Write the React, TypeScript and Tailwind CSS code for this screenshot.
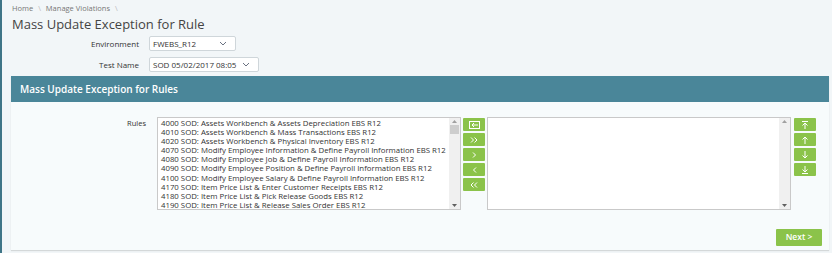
const rules = [
  "4000 SOD: Assets Workbench & Assets Depreciation EBS R12",
  "4010 SOD: Assets Workbench & Mass Transactions EBS R12",
  "4020 SOD: Assets Workbench & Physical Inventory EBS R12",
  "4070 SOD: Modify Employee Information & Define Payroll Information EBS R12",
  "4080 SOD: Modify Employee Job & Define Payroll Information EBS R12",
  "4090 SOD: Modify Employee Position & Define Payroll Information EBS R12",
  "4100 SOD: Modify Employee Salary & Define Payroll Information EBS R12",
  "4170 SOD: Item Price List & Enter Customer Receipts EBS R12",
  "4180 SOD: Item Price List & Pick Release Goods EBS R12",
  "4190 SOD: Item Price List & Release Sales Order EBS R12",
];

function Chevron() {
  return (
    <svg width="8" height="5" viewBox="0 0 8 5" className="text-gray-500">
      <path d="M1 1l3 3 3-3" fill="none" stroke="currentColor" strokeWidth="1" />
    </svg>
  );
}

function Select({ value, width }: { value: string; width: string }) {
  return (
    <div
      className={`${width} h-[15px] bg-white border border-[#cfd6da] rounded-[2px] flex items-center justify-between pl-[3px] pr-[8px] text-[8px] text-[#333]`}
    >
      <span>{value}</span>
      <Chevron />
    </div>
  );
}

function Scrollbar({ thumb }: { thumb?: boolean }) {
  return (
    <div className="w-[11px] bg-[#f0f0f0] flex flex-col items-center justify-between py-[2px]">
      <div className="flex flex-col items-center gap-[2px]">
        <svg width="5" height="3" viewBox="0 0 5 3">
          <path d="M0 3L2.5 0 5 3z" fill="#a0a0a0" />
        </svg>
        {thumb && <div className="w-[9px] h-[9px] bg-[#cdcdcd]" />}
      </div>
      <svg width="5" height="3" viewBox="0 0 5 3">
        <path d="M0 0h5L2.5 3z" fill="#606060" />
      </svg>
    </div>
  );
}

function GreenBtn({ children }: { children: React.ReactNode }) {
  return (
    <div className="w-[22px] h-[13px] bg-[#8bc34a] rounded-[1px] flex items-center justify-center text-white">
      {children}
    </div>
  );
}

const stroke = { fill: "none", stroke: "white", strokeWidth: 1 } as const;

export default function App() {
  return (
    <div
      className="w-[832px] h-[253px] bg-[#f2f6f8] flex overflow-hidden"
      style={{ fontFamily: '"Open Sans", "Liberation Sans", sans-serif' }}
    >
      <div className="w-[2px] bg-[#3f7587] shrink-0" />
      <div className="flex-1 flex flex-col pl-[9px] pr-[3px]">
        {/* header */}
        <div className="text-[7.5px] text-[#777] pt-[4px] pl-[1px] h-[14px] leading-[8px]">
          Home <span className="text-[#bbb] mx-[3px]">\</span> Manage Violations{" "}
          <span className="text-[#bbb] mx-[3px]">\</span>
        </div>
        <h1 className="text-[13px] leading-[18px] text-[#444] pl-[1px] h-[20px] pt-[1px]">
          Mass Update Exception for Rule
        </h1>

        <div className="flex flex-col gap-[6px] pt-[2px] h-[42px]">
          <div className="flex items-center">
            <div className="w-[128px] text-right text-[8px] text-[#333]">Environment</div>
            <div className="ml-[10px]">
              <Select value="FWEBS_R12" width="w-[87px]" />
            </div>
          </div>
          <div className="flex items-center">
            <div className="w-[128px] text-right text-[8px] text-[#333]">Test Name</div>
            <div className="ml-[10px]">
              <Select value="SOD 05/02/2017 08:05" width="w-[110px]" />
            </div>
          </div>
        </div>

        {/* panel */}
        <div className="w-[818px] flex flex-col shadow-[0_1px_1px_rgba(0,0,0,0.12)]">
          <div className="h-[26px] bg-[#4a8699] flex items-center pl-[9px] text-white text-[10px] font-semibold">
            Mass Update Exception for Rules
          </div>
          <div className="h-[148px] bg-[#f7fbfc] flex flex-col">
            <div className="flex pt-[15px]">
              <div className="w-[135px] text-right text-[7.5px] text-[#333] pt-[1px]">Rules</div>
              <div className="ml-[11px] w-[304px] h-[93px] bg-white border border-[#c9c9c9] flex">
                <div className="flex-1 pl-[3px] pt-[1px] text-[7.8px] leading-[9.1px] text-[#333] whitespace-nowrap overflow-hidden">
                  {rules.map((r) => (
                    <div key={r}>{r}</div>
                  ))}
                </div>
                <Scrollbar thumb />
              </div>

              <div className="ml-[2px] flex flex-col gap-[2px] pt-[1px]">
                <GreenBtn>
                  <svg width="11" height="8" viewBox="0 0 11 8">
                    <rect x="0.5" y="0.5" width="10" height="7" {...stroke} />
                    <path d="M3 4h6M5 2L3 4l2 2" {...stroke} />
                  </svg>
                </GreenBtn>
                <GreenBtn>
                  <svg width="8" height="6" viewBox="0 0 8 6">
                    <path d="M1 0.5l2.5 2.5L1 5.5M4.5 0.5L7 3 4.5 5.5" {...stroke} />
                  </svg>
                </GreenBtn>
                <GreenBtn>
                  <svg width="5" height="6" viewBox="0 0 5 6">
                    <path d="M1 0.5L3.5 3 1 5.5" {...stroke} />
                  </svg>
                </GreenBtn>
                <GreenBtn>
                  <svg width="5" height="6" viewBox="0 0 5 6">
                    <path d="M4 0.5L1.5 3 4 5.5" {...stroke} />
                  </svg>
                </GreenBtn>
                <GreenBtn>
                  <svg width="8" height="6" viewBox="0 0 8 6">
                    <path d="M3.5 0.5L1 3l2.5 2.5M7 0.5L4.5 3 7 5.5" {...stroke} />
                  </svg>
                </GreenBtn>
              </div>

              <div className="ml-[2px] w-[304px] h-[93px] bg-white border border-[#c9c9c9] flex">
                <div className="flex-1" />
                <Scrollbar />
              </div>

              <div className="ml-[3px] flex flex-col gap-[2px] pt-[1px]">
                <GreenBtn>
                  <svg width="8" height="8" viewBox="0 0 8 8">
                    <path d="M1 0.5h6M4 2v6M1.5 4.5L4 2l2.5 2.5" {...stroke} />
                  </svg>
                </GreenBtn>
                <GreenBtn>
                  <svg width="8" height="8" viewBox="0 0 8 8">
                    <path d="M4 1v7M1.5 3.5L4 1l2.5 2.5" {...stroke} />
                  </svg>
                </GreenBtn>
                <GreenBtn>
                  <svg width="8" height="8" viewBox="0 0 8 8">
                    <path d="M4 0v7M1.5 4.5L4 7l2.5-2.5" {...stroke} />
                  </svg>
                </GreenBtn>
                <GreenBtn>
                  <svg width="8" height="8" viewBox="0 0 8 8">
                    <path d="M4 0v6M1.5 3.5L4 6l2.5-2.5M1 7.5h6" {...stroke} />
                  </svg>
                </GreenBtn>
              </div>
            </div>

            <div className="flex justify-end pr-[7px] pt-[19px]">
              <div className="w-[46px] h-[17px] bg-[#8bc34a] rounded-[1px] flex items-center justify-center text-white text-[8.5px] font-semibold">
                Next &gt;
              </div>
            </div>
          </div>
        </div>
      </div>
    </div>
  );
}
